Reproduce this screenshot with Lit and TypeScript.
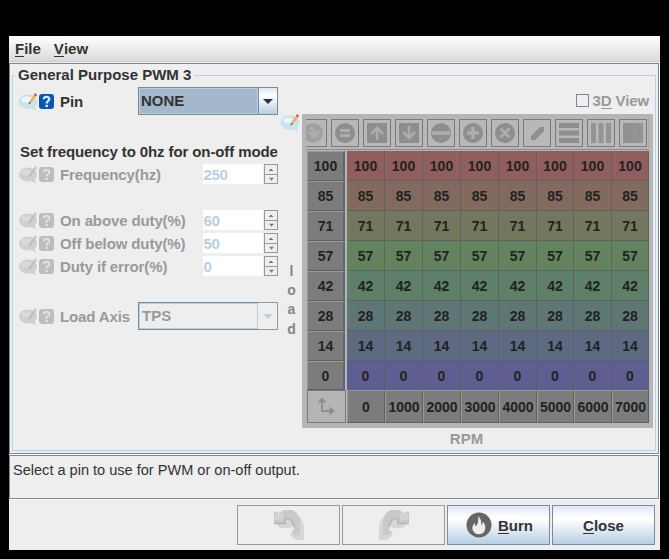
import { LitElement, html, svg, css } from "lit";
import { customElement } from "lit/decorators.js";
import { classMap } from "lit/directives/class-map.js";

const ROWS = [
  { v: 100, c: "#915e5e" },
  { v: 85, c: "#826b5e" },
  { v: 71, c: "#73775e" },
  { v: 57, c: "#63825e" },
  { v: 42, c: "#5e8068" },
  { v: 28, c: "#5e7775" },
  { v: 14, c: "#5e6a82" },
  { v: 0, c: "#5e5e91" },
];
const RPM = [0, 1000, 2000, 3000, 4000, 5000, 6000, 7000];

const bubble = (off: boolean) => html`<svg class="bubble" width="20" height="20" viewBox="0 0 20 20">
  <path d="M9 4C14 4 17.500 6.500 17.500 10.500C17.500 13 16.500 14.500 15 15.500L16.500 18.500L12.500 16.800C6 18 0.500 15.500 0.500 10.800C0.500 6.500 4 4 9 4Z" fill=${off ? "#d0d0d0" : "#c5e5f1"} stroke=${off ? "#cacaca" : "#b2d8e8"} stroke-width=".7"/>
  <ellipse cx="7.500" cy="8.500" rx="5.500" ry="3" fill=${off ? "#d9d9d9" : "#e8f7fc"}/>
  <path d="M9.500 13.500L10.200 10.500L15 4L17 5.500L12 12Z" fill=${off ? "#c0c0c0" : "#f3ae4b"}/>
  <path d="M9.500 13.500L10.200 10.800L11.800 12.100Z" fill=${off ? "#b5b5b5" : "#75614d"}/>
  <path d="M14.800 4L16 2.100L18.200 3.900L16.900 5.500Z" fill=${off ? "#c8c8c8" : "#e2485a"}/>
</svg>`;

const help = (off: boolean) => html`<svg class="help" width="15" height="15" viewBox="0 0 15 15">
  <rect width="15" height="15" rx="3" fill=${off ? "#bdbdbd" : "#0a55b5"}/>
  <path d="M4.800 5.300C4.800 2 10.300 2 10.300 5C10.300 7.200 7.600 7 7.600 9.600" fill="none" stroke=${off ? "#dedede" : "#d5f3fa"} stroke-width="2.300"/>
  <rect x="6.400" y="10.800" width="2.500" height="2.300" fill=${off ? "#dedede" : "#d5f3fa"}/>
</svg>`;

const disc = svg`<circle cx="14" cy="14" r="10" fill="#8e8e8e"/>`;
const tile = svg`<rect x="4" y="4" width="20" height="20" rx="1" fill="#8e8e8e"/>`;
const L = "#adadad";
const TOOLS = [
  svg`<circle cx="14" cy="14" r="10" fill="#a0a0a0"/><path d="M11 9Q15 9 15 14M11 14L15 18L19 14Z" fill=${L} stroke=${L} stroke-width="3"/>`,
  svg`${disc}<path d="M9 11.500H19M9 16.500H19" stroke=${L} stroke-width="3"/>`,
  svg`${tile}<path d="M14 21V9M8 15L14 9L20 15" fill="none" stroke=${L} stroke-width="2.600"/>`,
  svg`${tile}<path d="M14 7V19M8 13L14 19L20 13" fill="none" stroke=${L} stroke-width="2.600"/>`,
  svg`${disc}<path d="M5 14H23" stroke=${L} stroke-width="3.600"/>`,
  svg`${disc}<path d="M8 14H20M14 8V20" stroke=${L} stroke-width="3.600"/>`,
  svg`${disc}<path d="M9.500 9.500L18.500 18.500M18.500 9.500L9.500 18.500" stroke=${L} stroke-width="3"/>`,
  svg`<path d="M8 21V17L17 8H21V12L12 21Z" fill="#8e8e8e"/>`,
  svg`<path d="M4 6.500H24M4 14H24M4 21.500H24" stroke="#8e8e8e" stroke-width="5"/>`,
  svg`<path d="M6.500 4V24M14 4V24M21.500 4V24" stroke="#949494" stroke-width="5"/>`,
  svg`<rect x="4" y="4" width="20" height="20" fill="#919191"/><path d="M16 4V24M22 4V24" stroke="#959595" stroke-width="3"/>`,
];

@customElement("app-root")
export class AppRoot extends LitElement {
  static styles = css`
    :host { display: block; width: 669px; height: 559px; background: #000; overflow: hidden;
      font: bold 15px/18px "Liberation Sans", Arial, sans-serif; color: #333; }
    * { box-sizing: border-box; }
    svg { display: block; flex: none; }
    .stage { padding-top: 36px; }
    .window { margin-left: 9px; width: 651px; height: 514px; background: #eee; display: flex; flex-direction: column; }
    .menu { height: 27px; display: flex; gap: 13px; padding: 4px 6px; background: linear-gradient(#fff, #dadada 25px, #ccc 25px, #ccc 26px, #eee 26px); }
    u { text-decoration: none; box-shadow: inset 0 -1px #333; display: inline-block; height: 17px; line-height: 18px; }
    .main { height: 391px; border: 1px solid #7a8a99; margin-right: 1px; padding: 2px; flex: none; box-shadow: 1px 1px #fff; }
    fieldset { margin: 0; padding: 0; border: 1px solid #b8cfe5; width: 644px; height: 385px; min-width: 0; }
    legend { margin-left: 2px; padding: 0 3px; height: 18px; line-height: 18px; }
    .content { display: flex; margin-top: -6px; }
    .left { width: 267px; padding: 9px 0 0 6px; display: flex; flex-direction: column; flex: none; }
    .row { display: flex; align-items: center; height: 22px; margin-bottom: 1px; }
    .row.tall { height: 28px; margin: 0; }
    .row.off { color: #999; }
    .row .name { margin-left: 6px; padding-top: 2px; width: 143px; flex: none; white-space: nowrap; letter-spacing: -.12px; }
    .row .name.short { width: 78px; }
    .combo { width: 140px; height: 28px; border: 1px solid #7a8a99; display: flex; background: #a3b8cc; }
    .combo .val { flex: 1; border: 1px solid #b8cfe5; padding: 3px 1px; }
    .combo .drop { width: 19px; border-left: 1px solid #7a8a99; display: flex; align-items: center; justify-content: center; background: linear-gradient(#dde8f3, #fff 30%, #b8cfe5); }
    .combo.off { background: #eee; border-color: #999; }
    .combo.off .val { box-shadow: 0 0 0 1px #7a8a99; padding-left: 2px; }
    .combo.off .drop { background: #eee; border: 0; }
    .note { height: 20px; margin: 28px 0 0 1px; white-space: nowrap; letter-spacing: -.11px; }
    .field { width: 60px; height: 20px; background: #fff; color: #b8cfe5; line-height: 21px; letter-spacing: -.3px; padding-left: .5px; }
    .spin { width: 14px; height: 20px; margin-left: 1px; border: 1px solid #999; display: flex; flex-direction: column; }
    .spin svg + svg { border-top: 1px solid #999; }
    .gap { height: 23px; }
    .gap.low { height: 24px; }
    .axis { width: 22px; flex: none; display: flex; flex-direction: column; align-items: center; padding-top: 34px; }
    .axis .word { display: flex; flex-direction: column; align-items: center; margin: 130px 0 0 1px; color: #858585; line-height: 19.200px; font-size: 14px; }
    .right { width: 351px; display: flex; flex-direction: column; }
    .three { align-self: flex-end; display: flex; align-items: center; gap: 4px; color: #999; height: 22px; margin: 11px 4px 3px 0; letter-spacing: -.12px; }
    .three .text { padding-top: 2px; }
    .three u { box-shadow: inset 0 -1px #999; }
    .box { width: 13px; height: 13px; border: 1px solid #7a8a99; }
    .table { height: 314px; background: #b5b5b5; padding: 4px; }
    .tools { display: flex; justify-content: flex-end; gap: 4px; width: 343px; height: 33px; overflow: hidden; padding: 1px 1px 0 0; border-right: 1px solid #a8a8a8; border-bottom: 1px solid #b5b5b5; background: linear-gradient(#b8b8b8 31px, #8c8c8c 31px); }
    .tool { width: 28px; height: 28px; border: 1px solid #7a7a7a; flex: none; display: flex; align-items: center; justify-content: center; }
    .grid { display: grid; grid-template-columns: 40px repeat(5, 38px) 37px 38px 37px; grid-template-rows: repeat(7, 30px) 29px 33px; margin-left: 1px; }
    .cell { color: #222; display: flex; align-items: center; justify-content: center; font-size: 14px; border-right: 1px solid #5d6268; border-bottom: 1px solid #5d6268; }
    .cell.zero { border-bottom: 0; }
    .hd { background: #7c7c7c; border: 1px solid #606060; border-top-color: #999; border-left-color: #999; }
    .hd.side { margin-right: 2px; border-right: 2px solid #5d6670; }
    .corner { border: 1px solid #7a7a7a; margin-right: 1px; }
    .rpm { text-align: center; color: #999; margin: 2px 22px 0 0; }
    .hint { height: 44px; border: 1px solid #7a8a99; margin: 1px 1px 1px 0; box-shadow: 1px 1px #fff; padding: 5px 3px; font-weight: normal; font-size: 14.550px; flex: none; }
    .buttons { display: flex; justify-content: flex-end; gap: 2px; padding: 5px 5px 0 0; }
    button { font: inherit; color: inherit; width: 103px; height: 40px; padding: 0; border: 1px solid #7a8a99; background: linear-gradient(#dde8f3, #fff 30%, #fff 35%, #b8cfe5); display: flex; align-items: center; justify-content: center; gap: 6px; }
    button .text { padding-top: 2px; }
    button.off { background: #eee; border-color: #999; }
    button.burn { padding-left: 2px; }
  `;

  icons(off = true) {
    return html`${bubble(off)}${help(off)}`;
  }

  spinner(name: string, value: number) {
    return html`<div class="row off">${this.icons()}<span class="name">${name}</span>
      <div class="field">${value}</div>
      <div class="spin">
        <svg width="12" height="9" viewBox="0 0 12 9"><path d="M4 6V5H5V4H7V5H8V6Z" fill="#777"/></svg>
        <svg width="12" height="10" viewBox="0 0 12 10"><path d="M4 3H9V4H8V5H7V6H6V5H5V4H4Z" fill="#777"/></svg>
      </div></div>`;
  }

  combo(value: string, off: boolean) {
    return html`<div class=${classMap({ combo: true, off })}><div class="val">${value}</div>
      <div class="drop"><svg width="10" height="5" viewBox="0 0 10 5"><path d="M0 0H10L5 5Z" fill=${off ? "#b8cfe5" : "#333"}/></svg></div></div>`;
  }

  arrow(flip: boolean) {
    return html`<svg width="30" height="30" viewBox="0 0 30 30"><g transform=${flip ? "translate(30 0) scale(-1 1)" : ""}>
      <path d="M3 3H17C26 4 28 9 30 16V30H22L16 25L20 20V15L16 18H6L3 15Z" fill="#d6d6d6"/>
      <path d="M0 1L5 3L10 0H18C24 2 26 8 26 14V25H21L17 22L20 20C19 14 17 9 12 9V14H0Z" fill="#c9c9c9"/>
      <path d="M0 13.500H11V8.500C16 7.500 19 11 20 17" fill="none" stroke="#b6b6b6" stroke-width="1.500"/>
      <path d="M1 3H9V10H1Z" fill="#d2d2d2"/>
    </g></svg>`;
  }

  render() {
    return html`<div class="stage"><div class="window">
      <div class="menu"><span><u>F</u>ile</span><span><u>V</u>iew</span></div>
      <div class="main"><fieldset><legend>General Purpose PWM 3</legend>
        <div class="content">
          <div class="left">
            <div class="row tall">${this.icons(false)}<span class="name short">Pin</span>${this.combo("NONE", false)}</div>
            <div class="note">Set frequency to 0hz for on-off mode</div>
            ${this.spinner("Frequency(hz)", 250)}
            <div class="gap"></div>
            ${this.spinner("On above duty(%)", 60)}
            ${this.spinner("Off below duty(%)", 50)}
            ${this.spinner("Duty if error(%)", 0)}
            <div class="gap low"></div>
            <div class="row tall off">${this.icons()}<span class="name short">Load Axis</span>${this.combo("TPS", true)}</div>
          </div>
          <div class="axis">${bubble(false)}
            <div class="word">${[..."load"].map((c) => html`<span>${c}</span>`)}</div>
          </div>
          <div class="right">
            <div class="three"><span class="box"></span><span class="text">3<u>D</u> View</span></div>
            <div class="table">
              <div class="tools">${TOOLS.map((t) => html`<div class="tool"><svg width="28" height="28" viewBox="0 0 28 28">${t}</svg></div>`)}</div>
              <div class="grid">
                ${ROWS.map((r) => html`<div class="cell hd side">${r.v}</div>${RPM.map(() => html`<div class=${classMap({ cell: true, zero: r.v === 0 })} style="background:${r.c}">${r.v}</div>`)}`)}
                <div class="corner"><svg width="36" height="30" viewBox="0 0 36 30"><path d="M14 10V20H24" fill="none" stroke="#8e8e8e" stroke-width="2"/><path d="M9.500 11.500L14 6.500L18.500 11.500ZM21.500 15.500L27 20L21.500 24.500Z" fill="#8e8e8e"/></svg></div>
                ${RPM.map((v) => html`<div class="cell hd">${v}</div>`)}
              </div>
            </div>
            <div class="rpm">RPM</div>
          </div>
        </div>
      </fieldset></div>
      <div class="hint">Select a pin to use for PWM or on-off output.</div>
      <div class="buttons">
        <button class="off">${this.arrow(false)}</button>
        <button class="off">${this.arrow(true)}</button>
        <button class="burn"><svg width="26" height="26" viewBox="0 0 26 26"><circle cx="13" cy="13" r="12.500" fill="#666"/><path d="M12 4C16 8 15 10 15.500 13C17 12 17 10 16.500 9C20 13 20 17 18 20C15 23 10 23 8 20C5 17 6.500 13 9 11C9 13 9 14 10 14C12 12 13 8 12 4Z" fill="#eee"/></svg><span class="text"><u>B</u>urn</span></button>
        <button><span class="text"><u>C</u>lose</span></button>
      </div>
    </div></div>`;
  }
}
